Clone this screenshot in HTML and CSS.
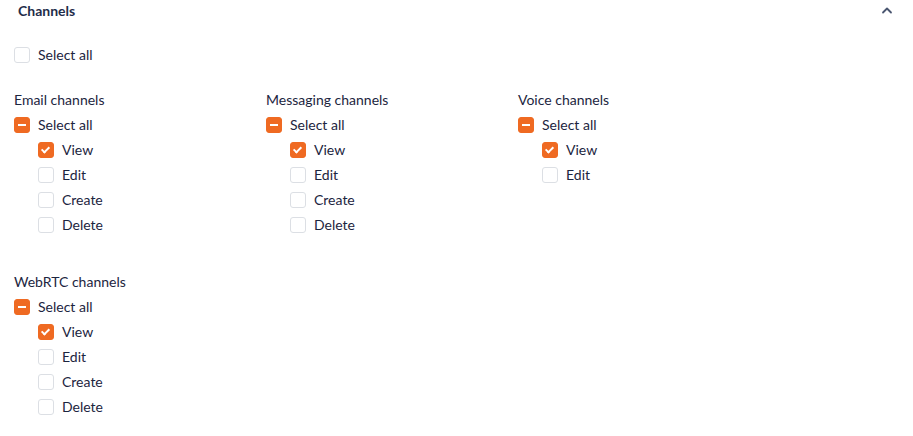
FILE: index.html
```html
<!DOCTYPE html>
<html lang="en">
<head>
    <meta charset="UTF-8">
    <title>Channels</title>
    <link rel="stylesheet" href="styles.css">
</head>
<body>
    <div class="section">
        <div class="section-header">
            <h2>Channels</h2>
            <svg class="chevron" width="12" height="8" viewBox="0 0 12 8">
                <path d="M2 6.5 L6 2.5 L10 6.5" fill="none" stroke="#4a5670" stroke-width="1.8" stroke-linecap="round" stroke-linejoin="round"/>
            </svg>
        </div>

        <label class="check top-all"><span class="box"></span>Select all</label>

        <div class="groups">
            <div class="group">
                <div class="group-title">Email channels</div>
                <label class="check"><span class="box partial"></span>Select all</label>
                <div class="items">
                    <label class="check"><span class="box checked"></span>View</label>
                    <label class="check"><span class="box"></span>Edit</label>
                    <label class="check"><span class="box"></span>Create</label>
                    <label class="check"><span class="box"></span>Delete</label>
                </div>
            </div>
            <div class="group">
                <div class="group-title">Messaging channels</div>
                <label class="check"><span class="box partial"></span>Select all</label>
                <div class="items">
                    <label class="check"><span class="box checked"></span>View</label>
                    <label class="check"><span class="box"></span>Edit</label>
                    <label class="check"><span class="box"></span>Create</label>
                    <label class="check"><span class="box"></span>Delete</label>
                </div>
            </div>
            <div class="group">
                <div class="group-title">Voice channels</div>
                <label class="check"><span class="box partial"></span>Select all</label>
                <div class="items">
                    <label class="check"><span class="box checked"></span>View</label>
                    <label class="check"><span class="box"></span>Edit</label>
                </div>
            </div>
            <div class="group">
                <div class="group-title">WebRTC channels</div>
                <label class="check"><span class="box partial"></span>Select all</label>
                <div class="items">
                    <label class="check"><span class="box checked"></span>View</label>
                    <label class="check"><span class="box"></span>Edit</label>
                    <label class="check"><span class="box"></span>Create</label>
                    <label class="check"><span class="box"></span>Delete</label>
                </div>
            </div>
        </div>
    </div>
</body>
</html>
```

FILE: styles.css
```css
body {
    margin: 0;
    background: #fff;
    font-family: Lato, "Liberation Sans", sans-serif;
    font-size: 14px;
    color: #1c2540;
}

.section {
    padding: 0 14px;
}

.section-header {
    display: flex;
    justify-content: space-between;
    align-items: center;
    height: 20px;
    padding-left: 4px;
    padding-right: 6px;
}

.section-header h2 {
    margin: 0;
    font-size: 14px;
    font-weight: 700;
    color: #1f2c4a;
}

.chevron {
    display: block;
}

.check {
    display: flex;
    align-items: center;
    height: 25px;
    gap: 8px;
    cursor: pointer;
}

.top-all {
    margin-top: 22px;
}

.box {
    width: 16px;
    height: 16px;
    box-sizing: border-box;
    border: 1px solid #dcdfe4;
    border-radius: 3px;
    background: #fff;
    position: relative;
    flex: none;
}

.box.checked,
.box.partial {
    background: #ef6a22;
    border-color: #ef6a22;
}

.box.partial::after {
    content: "";
    position: absolute;
    left: 3px;
    top: 6px;
    width: 8px;
    height: 2px;
    background: #fff;
}

.box.checked::after {
    content: "";
    position: absolute;
    left: 4px;
    top: 2px;
    width: 3px;
    height: 6px;
    border: solid #fff;
    border-width: 0 2px 2px 0;
    transform: rotate(45deg);
}

.groups {
    display: grid;
    grid-template-columns: repeat(3, 252px);
    row-gap: 32px;
    margin-top: 20px;
}

.group-title {
    height: 25px;
    line-height: 25px;
}

.items {
    padding-left: 24px;
}
```
